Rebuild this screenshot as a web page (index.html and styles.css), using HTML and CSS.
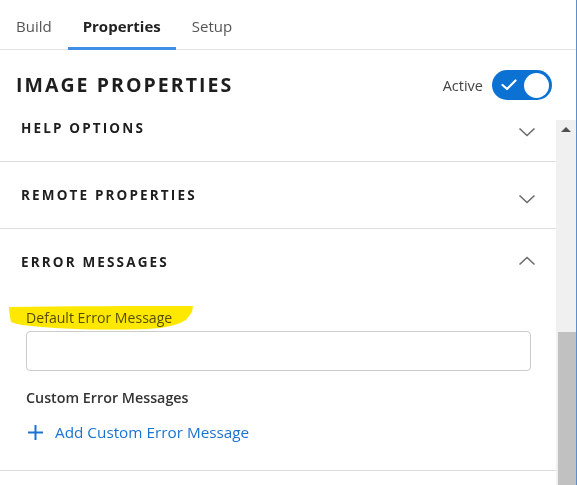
FILE: index.html
```html
<!DOCTYPE html>
<html lang="en">
<head>
<meta charset="utf-8">
<title>Image Properties</title>
<link rel="stylesheet" href="styles.css">
</head>
<body>
<div class="app">
  <nav class="tabs">
    <a class="tab">Build</a>
    <a class="tab active">Properties</a>
    <a class="tab">Setup</a>
  </nav>
  <header class="title-row">
    <h1 class="title">IMAGE PROPERTIES</h1>
    <div class="active-wrap">
      <span class="active-label">Active</span>
      <span class="toggle">
        <svg class="check" width="16" height="12" viewBox="0 0 16 12"><path d="M1.5 6 L6 10 L14.5 1.5" fill="none" stroke="#fff" stroke-width="2.2" stroke-linecap="round" stroke-linejoin="round"/></svg>
        <span class="knob"></span>
      </span>
    </div>
  </header>
  <div class="body">
    <div class="viewport">
      <div class="list">
        <section class="section">
          <div class="sec-head"><span class="sec-title">HELP OPTIONS</span>
            <svg class="chev down" width="18" height="10" viewBox="0 0 18 10"><path d="M1.5 1.5 L9 8.5 L16.5 1.5" fill="none" stroke="#6b6b6b" stroke-width="1.6"/></svg>
          </div>
        </section>
        <section class="section">
          <div class="sec-head"><span class="sec-title">REMOTE PROPERTIES</span>
            <svg class="chev down" width="18" height="10" viewBox="0 0 18 10"><path d="M1.5 1.5 L9 8.5 L16.5 1.5" fill="none" stroke="#6b6b6b" stroke-width="1.6"/></svg>
          </div>
        </section>
        <section class="section open">
          <div class="sec-head"><span class="sec-title">ERROR MESSAGES</span>
            <svg class="chev up" width="18" height="10" viewBox="0 0 18 10"><path d="M1.5 8.5 L9 1.5 L16.5 8.5" fill="none" stroke="#6b6b6b" stroke-width="1.6"/></svg>
          </div>
          <div class="sec-body">
            <label class="field-label">Default Error Message</label>
            <svg class="marker" width="190" height="26" viewBox="0 0 190 26"><path d="M2 2 C60 1 130 1 186 1 L185 7 L179 15 C170 20 160 23 140 24 C110 25 70 25 35 22 C20 21 8 19 4 17 C3 12 2 7 2 2 Z" fill="#ffe800"/></svg>
            <input class="field" type="text">
            <div class="sub-title">Custom Error Messages</div>
            <a class="add-link">
              <svg class="plus" width="17" height="17" viewBox="0 0 17 17"><path d="M8.5 1 V16 M1 8.5 H16" stroke="#1a73d1" stroke-width="2"/></svg>
              <span>Add Custom Error Message</span>
            </a>
          </div>
        </section>
      </div>
    </div>
    <div class="scrollbar">
      <div class="sb-arrow"><span class="tri"></span></div>
      <div class="sb-space"></div>
      <div class="sb-thumb"></div>
    </div>
  </div>
</div>
</body>
</html>
```
FILE: styles.css
```css
* { box-sizing: border-box; }
html, body { margin: 0; padding: 0; background: #fff; }
body { font-family: "Open Sans", "Noto Sans", sans-serif; color: #333; }

.app {
  width: 577px;
  height: 485px;
  border-right: 1px solid #5d8fcc;
  display: flex;
  flex-direction: column;
  overflow: hidden;
}

.tabs {
  height: 50px;
  flex: none;
  display: flex;
  border-bottom: 1px solid #e2e2e2;
}
.tab {
  display: flex;
  align-items: center;
  padding: 5px 16px 0 16px;
  font-size: 15px;
  color: #555;
  border-bottom: 3px solid transparent;
  margin-bottom: -1px;
}
.tab.active {
  font-weight: 700;
  color: #222;
  border-bottom-color: #3f8fe6;
  padding: 5px 15px 0 15px;
}

.title-row {
  height: 70px;
  flex: none;
  display: flex;
  align-items: center;
  justify-content: space-between;
  padding: 0 24px 2px 16px;
}
.title {
  margin: 0;
  font-size: 19.5px;
  font-weight: 700;
  letter-spacing: 2.05px;
  color: #1e1e1e;
}
.active-wrap {
  display: flex;
  align-items: center;
  gap: 9px;
  margin-top: 2px;
}
.active-label {
  font-size: 14.5px;
  color: #444;
}
.toggle {
  width: 60px;
  height: 30px;
  border-radius: 15px;
  background: #0b72d3;
  display: flex;
  align-items: center;
  justify-content: space-between;
  padding: 0 3px 0 9px;
}
.knob {
  width: 25px;
  height: 25px;
  border-radius: 50%;
  background: #fff;
}

.body {
  flex: 1;
  display: flex;
  min-height: 0;
}
.viewport {
  width: 556px;
  flex: none;
  overflow: hidden;
}
.list { margin-top: -25px; }

.section { border-bottom: 1px solid #dedede; }
.sec-head {
  height: 66px;
  display: flex;
  align-items: center;
  justify-content: space-between;
  padding: 2px 20px 0 21px;
}
.sec-title {
  font-size: 13.5px;
  line-height: 1;
  font-weight: 700;
  letter-spacing: 2.15px;
  color: #1e1e1e;
}
.chev.down { margin-top: 6px; }
.chev.up { margin-top: -4px; }
.sec-body {
  position: relative;
  padding: 13px 25px 28px 26px;
}
.field-label {
  display: block;
  position: relative;
  font-size: 14.1px;
  line-height: 20px;
  color: #555;
}
.marker {
  position: absolute;
  left: 7px;
  top: 10px;
  mix-blend-mode: multiply;
}
.field {
  display: block;
  width: 100%;
  height: 40px;
  margin-top: 3px;
  border: 1px solid #cccccc;
  border-radius: 4px;
  background: #fff;
}
.sub-title {
  margin-top: 17px;
  font-size: 14.3px;
  font-weight: 600;
  line-height: 20px;
  color: #333;
}
.add-link {
  margin-top: 14px;
  display: flex;
  align-items: center;
  gap: 11px;
  font-size: 15.3px;
  line-height: 20px;
  color: #1a73d1;
  padding-left: 1px;
}

.scrollbar {
  width: 20px;
  flex: none;
  background: #f0f0f0;
  display: flex;
  flex-direction: column;
}
.sb-arrow {
  height: 18px;
  display: flex;
  justify-content: center;
  align-items: center;
}
.tri {
  width: 0;
  height: 0;
  border-left: 5px solid transparent;
  border-right: 5px solid transparent;
  border-bottom: 5px solid #505050;
}
.sb-space { height: 194px; }
.sb-thumb {
  flex: 1;
  margin-left: 2px;
  background: #c1c1c1;
}
```
